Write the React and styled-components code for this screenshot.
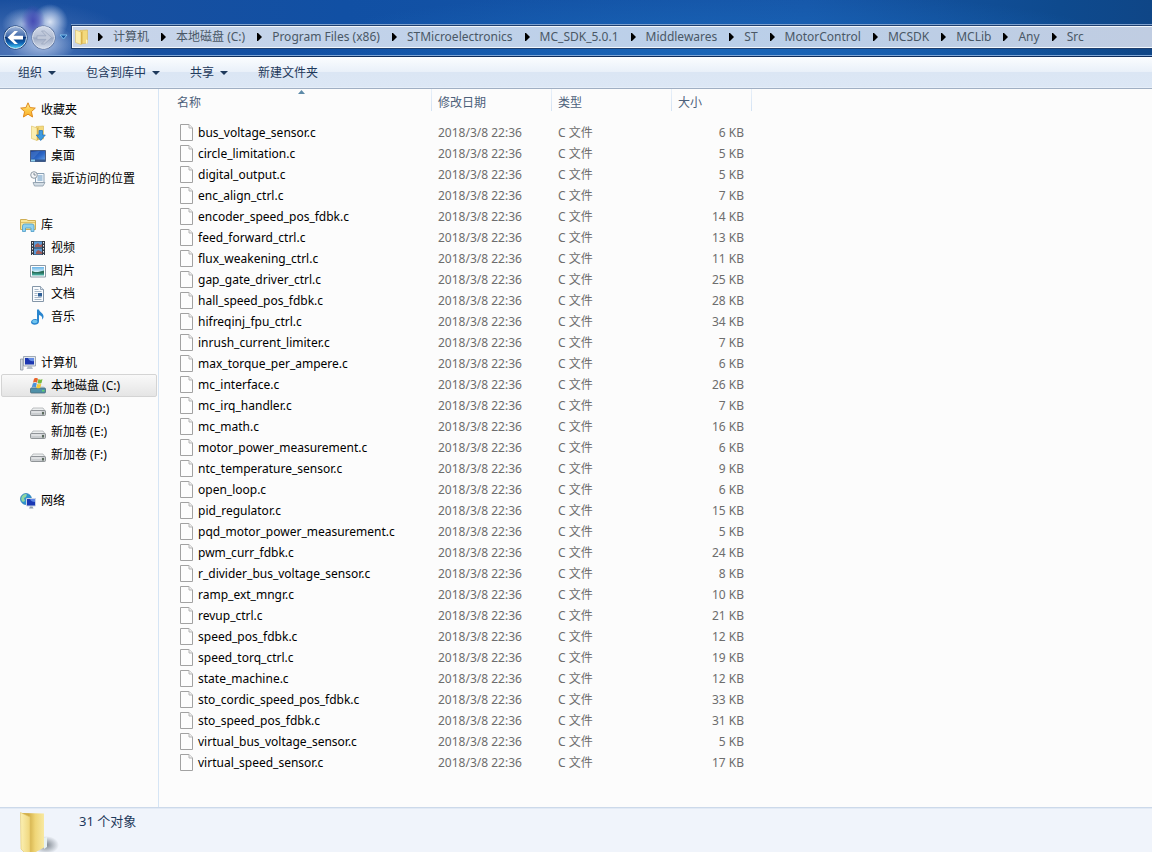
import React from "react";
import styled, { createGlobalStyle } from "styled-components";

const GlobalStyle = createGlobalStyle`
  * {
    box-sizing: border-box;
  }
  body {
    margin: 0;
    background: #fcfcfc;
    color: #000;
    font-family: "Noto Sans", "Noto Sans CJK SC", sans-serif;
    font-size: 12px;
  }
  button {
    font: inherit;
    color: inherit;
    border: 0;
    padding: 0;
    background: none;
  }
  a {
    color: inherit;
    text-decoration: none;
  }
  svg {
    display: block;
    flex: none;
  }
`;

const Window = styled.div`
  display: flex;
  flex-direction: column;
  min-height: 100vh;
  overflow: hidden;
`;

const TitleBar = styled.header`
  display: flex;
  align-items: flex-end;
  height: 57px;
  padding: 0 0 7px 3px;
  border-bottom: 1px solid #0c2c5c;
  box-shadow: inset 0 -1px #7fa6d6;
  background:
    radial-gradient(ellipse 12px 16px at 33px 21px, #4348b4ee 0%, #4a50b8aa 45%, #4a50b800 100%),
    radial-gradient(ellipse 18px 18px at 50px 22px, #e6edf9ee 0%, #c8d6f099 50%, #c8d6f000 100%),
    radial-gradient(ellipse 22px 16px at 24px 24px, #c4d3eecc 0%, #9fb6de77 50%, #9fb6de00 100%),
    radial-gradient(ellipse 34px 20px at 42px 44px, #b4c7e8ee 0%, #b4c7e800 100%),
    radial-gradient(ellipse 120px 50px at 20px 50px, #4f76b8 0%, #4f76b800 100%),
    radial-gradient(ellipse 420px 60px at 720px 50px, #1a66b8 0%, #1a66b800 100%),
    linear-gradient(90deg, #1a4f9e 0%, #1150a4 30%, #1656a8 70%, #0e4a8e 92%, #0f4687 100%);
`;

const NavButtons = styled.nav`
  display: flex;
  align-items: center;
  gap: 3px;
  width: 68px;
  height: 24px;
`;

const AddressBar = styled.div`
  display: flex;
  flex: 1;
  align-items: center;
  min-width: 0;
  height: 24px;
  padding-left: 2px;
  white-space: nowrap;
  color: #4a5866;
  background: linear-gradient(90deg, #c8d5ea, #bacfe9 60%, #c0cde2);
  border: 1px solid #1f3f6e;
  border-right: 0;
  box-shadow: inset 1px 1px #f2f7fc, inset 0 -1px #f2f7fc, 0 -1px #7fa2cf;
`;

const Crumbs = styled.ol`
  display: flex;
  align-items: center;
  margin: 0;
  padding: 0;
  list-style: none;
`;

const Crumb = styled.li`
  display: flex;
  align-items: center;
  gap: 10px;
  padding-left: 12px;
  line-height: 18px;

  &:first-child {
    padding-left: 8px;
  }
`;

const Toolbar = styled.div`
  display: flex;
  align-items: center;
  gap: 30px;
  height: 32px;
  padding-left: 18px;
  color: #1e395b;
  background: linear-gradient(#fbfdff 0%, #e9f0f9 48%, #dbe6f4 50%, #dce7f5 100%);
  border-bottom: 1px solid #a0afc3;
  box-shadow: inset 0 -1px #e6eef8;
`;

const ToolButton = styled.button`
  display: flex;
  align-items: center;
  gap: 6px;
  line-height: 18px;
`;

const Body = styled.div`
  display: flex;
  flex: 1;
`;

const Sidebar = styled.aside`
  display: flex;
  flex-direction: column;
  gap: 23px;
  flex: 0 0 159px;
  padding: 9px 1px 0;
  border-right: 1px solid #d6e5f5;
`;

const TreeGroup = styled.ul`
  margin: 0;
  padding: 0;
  list-style: none;
`;

const TreeLink = styled.a`
  display: flex;
  align-items: center;
  gap: 5px;
  height: 23px;
  padding-left: ${({ $root }) => ($root ? 18 : 28)}px;
  border: 1px solid ${({ $active }) => ($active ? "#d4d4d4" : "transparent")};
  border-radius: 2px;
  line-height: 19px;
  background: ${({ $active }) =>
    $active ? "linear-gradient(#f9f9f9, #e5e5e5)" : "none"};
`;

const TreeLabel = styled.span`
  padding-bottom: 1px;
`;

const Main = styled.main`
  flex: 1;
  min-width: 0;
`;

const FileTable = styled.table`
  width: 593px;
  table-layout: fixed;
  border-collapse: separate;
  border-spacing: 0;
  color: #6d6d6d;
`;

const HeadCell = styled.th`
  width: ${({ $width }) => $width}px;
  height: 33px;
  padding: 1px 6px 0 ${({ $first }) => ($first ? 18 : 6)}px;
  text-align: left;
  vertical-align: top;
  font-weight: 400;
  line-height: 18px;
  color: #4c607a;
  background: linear-gradient(#e8f0f9, #d3e2f3) right top / 1px 22px no-repeat;
`;

const SortSlot = styled.div`
  display: flex;
  justify-content: center;
  height: 4px;
`;

const Cell = styled.td`
  height: 21px;
  padding: 0 8px 0 6px;
  line-height: 20px;
  white-space: nowrap;
  text-align: ${({ $right }) => ($right ? "right" : "left")};
`;

const NameCell = styled(Cell)`
  padding-left: 21px;
  color: #000;
`;

const FileName = styled.span`
  display: flex;
  align-items: center;
  gap: 5px;
`;

const StatusBar = styled.footer`
  display: flex;
  gap: 19px;
  height: 45px;
  padding: 3px 0 0 18px;
  overflow: hidden;
  color: #1e395b;
  font-size: 13px;
  line-height: 20px;
  background: #f0f4fb;
  border-top: 1px solid #ccd9ea;
  box-shadow: inset 0 1px #e2eaf5;
`;

const BackIcon = () => (
  <svg width="25" height="25" viewBox="0 0 25 25">
    <defs>
      <linearGradient id="back" x2="0" y2="1">
        <stop offset="0" stopColor="#a3b9dc" />
        <stop offset=".45" stopColor="#3c66a8" />
        <stop offset=".5" stopColor="#0b3576" />
        <stop offset=".75" stopColor="#0f63b4" />
        <stop offset="1" stopColor="#4ed5fa" />
      </linearGradient>
    </defs>
    <circle cx="12.500" cy="12.500" r="12" fill="#173a70" />
    <circle cx="12.500" cy="12.500" r="11" fill="url(#back)" stroke="#dbe7f5" />
    <path d="M4.500 12.500l7-6.500h3.500l-4.500 4.800h9.500v3.600h-9.500l4.500 4.600h-3.500z" fill="#fff" />
  </svg>
);

const ForwardIcon = () => (
  <svg width="25" height="25" viewBox="0 0 25 25">
    <defs>
      <linearGradient id="forward" x2="0" y2="1">
        <stop offset="0" stopColor="#d3dbea" />
        <stop offset=".48" stopColor="#b4bed3" />
        <stop offset=".52" stopColor="#9ba8c2" />
        <stop offset="1" stopColor="#d5ddeb" />
      </linearGradient>
    </defs>
    <circle cx="12.500" cy="12.500" r="12" fill="#5a6f98" />
    <circle cx="12.500" cy="12.500" r="11" fill="url(#forward)" stroke="#dde5f2" />
    <path
      d="M20.500 12.500l-7-6.500h-3l4.500 4.800h-9v3.600h9l-4.500 4.600h3z"
      fill="#c0c8d9"
      stroke="#97a3bc"
      strokeWidth=".7"
    />
  </svg>
);

const HistoryIcon = () => (
  <svg width="9" height="6" viewBox="0 0 9 6">
    <path d="M1 1h7L4.500 5z" fill="#14509c" stroke="#7cc0ee" />
  </svg>
);

const RightArrow = () => (
  <svg width="5" height="8" viewBox="0 0 5 8">
    <path d="M0 0h1l4 4-4 4H0z" fill="#000" />
  </svg>
);

const DownArrow = () => (
  <svg width="8" height="4" viewBox="0 0 8 4">
    <path d="M0 0h8L4 4z" fill="#1e395b" />
  </svg>
);

const SortArrow = () => (
  <svg width="7" height="4" viewBox="0 0 7 4">
    <path d="M3.500 0L7 4H0z" fill="#5d8aa8" />
  </svg>
);

const FolderShape = () => (
  <>
    <path d="M6 1.500L13.500 1v13L6 15z" fill="#f3d97c" stroke="#d8b650" strokeWidth=".6" />
    <path d="M1.500 1L7 3v12.500L1.500 13.500z" fill="#fbeeb0" stroke="#dcbf62" strokeWidth=".6" />
    <path d="M7 3v12.500l1.500-1V2z" fill="#d9b24c" />
  </>
);

const FolderIcon = () => (
  <svg width="16" height="16" viewBox="0 0 16 16">
    <FolderShape />
    <path d="M12 10.500l1.500.5v3l-1.500 1z" fill="#fdf6d0" />
  </svg>
);

const StarIcon = () => (
  <svg width="16" height="16" viewBox="0 0 16 16">
    <defs>
      <linearGradient id="star" x2="0" y2="1">
        <stop offset="0" stopColor="#fff3a8" />
        <stop offset=".5" stopColor="#fdcb4a" />
        <stop offset="1" stopColor="#f9ad2a" />
      </linearGradient>
    </defs>
    <path
      d="M8 .8l2.100 4.800 5.200.5-3.900 3.500 1.200 5.400L8 12.200 3.400 15l1.200-5.400L.7 6.100l5.200-.5z"
      fill="url(#star)"
      stroke="#e08a1c"
      strokeLinejoin="round"
    />
  </svg>
);

const DownloadsIcon = () => (
  <svg width="16" height="16" viewBox="0 0 16 16">
    <FolderShape />
    <path
      d="M9 5.500h3.500v4.500h2.800l-4.600 5.500-4.500-5.500H9z"
      fill="#3d9be0"
      stroke="#1c6db8"
      strokeWidth=".7"
    />
  </svg>
);

const DesktopIcon = () => (
  <svg width="16" height="16" viewBox="0 0 16 16">
    <defs>
      <linearGradient id="desk" x2="1" y2="1">
        <stop offset="0" stopColor="#1c3f94" />
        <stop offset=".55" stopColor="#2b66c6" />
        <stop offset="1" stopColor="#6fa8e8" />
      </linearGradient>
    </defs>
    <path d="M.5 2.500h15v11H.5z" fill="url(#desk)" stroke="#4b5d80" />
    <path d="M1 11.500h14v2H1z" fill="#35588e" />
    <path d="M1 11.500h4v2H1z" fill="#8fd0ee" />
    <path d="M1 4l9-1-6 7-3 1z" fill="#4c82d2" opacity=".5" />
  </svg>
);

const RecentIcon = () => (
  <svg width="16" height="16" viewBox="0 0 16 16">
    <path d="M5.500 2.500h8.500v9h-8.500z" fill="#f4f8fb" stroke="#8aa0b4" />
    <path d="M7.500 5h5M7.500 7h5M7.500 9h5" stroke="#5e93c0" />
    <path d="M3 11.500h12l-2 3.500H4.500z" fill="#d3dde5" stroke="#8b9ba8" strokeWidth=".8" />
    <circle cx="4" cy="4" r="3.300" fill="#f3f5f7" stroke="#8f9aa4" />
    <path d="M4 2v2h1.800" fill="none" stroke="#60707e" strokeWidth=".8" />
  </svg>
);

const LibraryIcon = () => (
  <svg width="16" height="16" viewBox="0 0 16 16">
    <path d="M.5 2.500h6l1.500 1h7.500v9H.5z" fill="#f8e59b" stroke="#cfae55" />
    <path d="M1 5.500h14" stroke="#dfc26a" />
    <path
      d="M2.500 14.500V9q0-2 2-2h7.500q2 0 2 2v5.500h-3v-3.500H5.500v3.500z"
      fill="#8fd0ee"
      stroke="#4d9cc8"
      strokeWidth=".8"
    />
  </svg>
);

const VideoIcon = () => (
  <svg width="16" height="16" viewBox="0 0 16 16">
    <path d="M1 1h14v14H1z" fill="#333a45" />
    <path d="M4 1.500h8v6H4zM4 8.500h8v6H4z" fill="#5b9bd8" />
    <path d="M5 5l3-2 2 2 2-1v3H5zM6 12l2-2 4 2v2H6z" fill="#a05e5c" />
    <path d="M2.500 2v13M13.500 2v13" stroke="#e8edf2" strokeDasharray="1.500 1.500" />
  </svg>
);

const PictureIcon = () => (
  <svg width="16" height="16" viewBox="0 0 16 16">
    <defs>
      <linearGradient id="scene" x2="0" y2="1">
        <stop offset="0" stopColor="#68b4ea" />
        <stop offset=".55" stopColor="#d4eef6" />
        <stop offset=".6" stopColor="#2e7a68" />
        <stop offset="1" stopColor="#4bb4a8" />
      </linearGradient>
    </defs>
    <path d="M.5 2.500h15v11.500H.5z" fill="#fff" stroke="#8b99a6" />
    <path d="M2 4h12v8.500H2z" fill="url(#scene)" />
    <path d="M2 8l4 1.500L14 7.500v3L2 10z" fill="#2b6e59" />
  </svg>
);

const DocumentIcon = () => (
  <svg width="16" height="16" viewBox="0 0 16 16">
    <path d="M2.500.5h8l3 3v12h-11z" fill="#fafcfe" stroke="#8496a8" />
    <path d="M10.500.5v3h3" fill="#dce5ee" stroke="#8496a8" strokeWidth=".8" />
    <path d="M4.500 3.500h4M4.500 5.500h7M4.500 7.500h3M4.500 9.500h3M4.500 11.500h7M4.500 13.500h7" stroke="#a8b8c8" />
    <path d="M8 7h4v3.500H8z" fill="#2f5f96" />
  </svg>
);

const MusicIcon = () => (
  <svg width="16" height="16" viewBox="0 0 16 16">
    <path d="M7 .5h2c.5 3 5 3.500 4.500 7.500-.2 1.500-1 2.200-1.500 2.500.7-2.500-.5-3.800-3-4.500v6.500c0 4-8 4.300-8 .8 0-2.500 3.200-4 6-2.800z" fill="#2a86cf" />
    <ellipse cx="4.800" cy="12.500" rx="2.700" ry="1.800" fill="#6fc4ee" />
  </svg>
);

const ComputerIcon = () => (
  <svg width="16" height="16" viewBox="0 0 16 16">
    <path d="M.5 4h2.500v11H.5z" fill="#d5dbe2" stroke="#8d98a5" strokeWidth=".8" />
    <path d="M3.500 1.500h12v9.500h-12z" fill="#e3e8ee" stroke="#8d98a5" strokeWidth=".8" />
    <path d="M5 3h9v6.500H5z" fill="#1b36b0" />
    <path d="M8 3h6v3q-4 1-6-3z" fill="#638be4" />
    <path d="M8 11h3.500l1.500 3H6.500z" fill="#b4bec9" />
  </svg>
);

const DriveIcon = () => (
  <svg width="16" height="16" viewBox="0 0 16 16">
    <path d="M3 7h10l2.500 3.500H.5z" fill="#eceeef" stroke="#a4a8ab" strokeWidth=".7" />
    <rect x=".5" y="9.500" width="15" height="5" rx="1" fill="#c9cccf" stroke="#7b8084" strokeWidth=".8" />
    <path d="M1.500 11h10" stroke="#f4f5f6" />
    <path d="M12 11h2v2.500h-2z" fill="#5b6a5c" />
  </svg>
);

const SystemDriveIcon = () => (
  <svg width="16" height="16" viewBox="0 0 16 16">
    <path d="M2.500 8h11l2 2.500H.5z" fill="#cfdde4" />
    <rect x=".5" y="10" width="15" height="5" rx="1" fill="#4f90a8" stroke="#4a6a78" strokeWidth=".8" />
    <path d="M12 12h2.500v1.500H12z" fill="#62d070" />
    <path d="M4 .7q2-1.500 4 0L7 4.700q-2-1.200-4 0z" fill="#e8622a" />
    <path d="M8.500 1q2 1.300 4 0l-1 4q-2 1.200-4 0z" fill="#76b83a" />
    <path d="M2.800 5.400q2-1.300 4 0l-1 4q-2-1.200-4 0z" fill="#4a92d8" />
    <path d="M7.300 5.700q2 1.300 4 0l-1 4q-2 1.200-4 0z" fill="#f6c934" />
  </svg>
);

const NetworkIcon = () => (
  <svg width="16" height="16" viewBox="0 0 16 16">
    <circle cx="6" cy="6" r="5.500" fill="#2f93d0" stroke="#2a78b0" strokeWidth=".7" />
    <path d="M2 3q3-3 5-1.500L6 4 4 5l1 3-2 1Q0 7 2 3z" fill="#8fd6a0" />
    <path d="M6.500 5.500h9v7.500h-9z" fill="#1a38b4" stroke="#c9d3e4" />
    <path d="M10 6h5v3q-4 0-5-3z" fill="#5d86e6" />
    <path d="M10 13.500h2.500l1 2H9z" fill="#8e9db0" />
  </svg>
);

const PageIcon = () => (
  <svg width="13" height="17" viewBox="0 0 13 17">
    <path d="M.5.5h8.500l3.500 3.500v12.500H.5z" fill="#fdfdfd" stroke="#a2a2a2" />
    <path d="M9 .5v3.500h3.500" fill="#eee" stroke="#b4b4b4" />
  </svg>
);

const BigFolderIcon = () => (
  <svg width="42" height="48" viewBox="0 0 42 48">
    <defs>
      <linearGradient id="flap" x2="1" y2="0">
        <stop offset="0" stopColor="#fbf0b4" />
        <stop offset="1" stopColor="#efd67c" />
      </linearGradient>
      <linearGradient id="inside" x2="1" y2="0">
        <stop offset=".3" stopColor="#d2ae48" />
        <stop offset=".6" stopColor="#efd577" />
        <stop offset="1" stopColor="#f8e9a2" />
      </linearGradient>
      <radialGradient id="shade">
        <stop offset="0" stopColor="#7d858e" />
        <stop offset="1" stopColor="#7d858e" stopOpacity="0" />
      </radialGradient>
    </defs>
    <ellipse cx="28" cy="34" rx="13" ry="9" fill="url(#shade)" />
    <path d="M4 2l22 .5v34l-16 9z" fill="url(#inside)" />
    <path d="M26 27l3-1v10l-3 2z" fill="#e7f1f2" />
    <path d="M2.500 1.500L12 6v41L3 38z" fill="url(#flap)" stroke="#e0c468" strokeWidth=".6" />
  </svg>
);

const crumbs = [
  "计算机",
  "本地磁盘 (C:)",
  "Program Files (x86)",
  "STMicroelectronics",
  "MC_SDK_5.0.1",
  "Middlewares",
  "ST",
  "MotorControl",
  "MCSDK",
  "MCLib",
  "Any",
  "Src",
];

const tools = [
  { label: "组织", menu: true },
  { label: "包含到库中", menu: true },
  { label: "共享", menu: true },
  { label: "新建文件夹" },
];

const tree = [
  [
    { label: "收藏夹", Icon: StarIcon },
    { label: "下载", Icon: DownloadsIcon },
    { label: "桌面", Icon: DesktopIcon },
    { label: "最近访问的位置", Icon: RecentIcon },
  ],
  [
    { label: "库", Icon: LibraryIcon },
    { label: "视频", Icon: VideoIcon },
    { label: "图片", Icon: PictureIcon },
    { label: "文档", Icon: DocumentIcon },
    { label: "音乐", Icon: MusicIcon },
  ],
  [
    { label: "计算机", Icon: ComputerIcon },
    { label: "本地磁盘 (C:)", Icon: SystemDriveIcon, active: true },
    { label: "新加卷 (D:)", Icon: DriveIcon },
    { label: "新加卷 (E:)", Icon: DriveIcon },
    { label: "新加卷 (F:)", Icon: DriveIcon },
  ],
  [{ label: "网络", Icon: NetworkIcon }],
];

const columns = [
  { label: "名称", width: 273, sorted: true },
  { label: "修改日期", width: 120 },
  { label: "类型", width: 120 },
  { label: "大小", width: 80 },
];

const files = [
  ["bus_voltage_sensor.c", 6],
  ["circle_limitation.c", 5],
  ["digital_output.c", 5],
  ["enc_align_ctrl.c", 7],
  ["encoder_speed_pos_fdbk.c", 14],
  ["feed_forward_ctrl.c", 13],
  ["flux_weakening_ctrl.c", 11],
  ["gap_gate_driver_ctrl.c", 25],
  ["hall_speed_pos_fdbk.c", 28],
  ["hifreqinj_fpu_ctrl.c", 34],
  ["inrush_current_limiter.c", 7],
  ["max_torque_per_ampere.c", 6],
  ["mc_interface.c", 26],
  ["mc_irq_handler.c", 7],
  ["mc_math.c", 16],
  ["motor_power_measurement.c", 6],
  ["ntc_temperature_sensor.c", 9],
  ["open_loop.c", 6],
  ["pid_regulator.c", 15],
  ["pqd_motor_power_measurement.c", 5],
  ["pwm_curr_fdbk.c", 24],
  ["r_divider_bus_voltage_sensor.c", 8],
  ["ramp_ext_mngr.c", 10],
  ["revup_ctrl.c", 21],
  ["speed_pos_fdbk.c", 12],
  ["speed_torq_ctrl.c", 19],
  ["state_machine.c", 12],
  ["sto_cordic_speed_pos_fdbk.c", 33],
  ["sto_speed_pos_fdbk.c", 31],
  ["virtual_bus_voltage_sensor.c", 5],
  ["virtual_speed_sensor.c", 17],
];

const App = () => (
  <Window>
    <GlobalStyle />
    <TitleBar>
      <NavButtons>
        <button aria-label="后退">
          <BackIcon />
        </button>
        <button aria-label="前进">
          <ForwardIcon />
        </button>
        <button aria-label="最近的页面">
          <HistoryIcon />
        </button>
      </NavButtons>
      <AddressBar>
        <FolderIcon />
        <Crumbs>
          {crumbs.map((crumb) => (
            <Crumb key={crumb}>
              <RightArrow />
              <a href="#path">{crumb}</a>
            </Crumb>
          ))}
        </Crumbs>
      </AddressBar>
    </TitleBar>
    <Toolbar>
      {tools.map(({ label, menu }) => (
        <ToolButton key={label}>
          {label}
          {menu && <DownArrow />}
        </ToolButton>
      ))}
    </Toolbar>
    <Body>
      <Sidebar>
        {tree.map((group) => (
          <TreeGroup key={group[0].label}>
            {group.map(({ label, Icon, active }, i) => (
              <li key={label}>
                <TreeLink href="#folder" $root={i === 0} $active={active}>
                  <Icon />
                  <TreeLabel>{label}</TreeLabel>
                </TreeLink>
              </li>
            ))}
          </TreeGroup>
        ))}
      </Sidebar>
      <Main>
        <FileTable>
          <thead>
            <tr>
              {columns.map(({ label, width, sorted }) => (
                <HeadCell key={label} $width={width} $first={sorted}>
                  <SortSlot>{sorted && <SortArrow />}</SortSlot>
                  {label}
                </HeadCell>
              ))}
            </tr>
          </thead>
          <tbody>
            {files.map(([name, size]) => (
              <tr key={name}>
                <NameCell>
                  <FileName>
                    <PageIcon />
                    {name}
                  </FileName>
                </NameCell>
                <Cell>2018/3/8 22:36</Cell>
                <Cell>C 文件</Cell>
                <Cell $right>{size} KB</Cell>
              </tr>
            ))}
          </tbody>
        </FileTable>
      </Main>
    </Body>
    <StatusBar>
      <BigFolderIcon />
      31 个对象
    </StatusBar>
  </Window>
);

export default App;
